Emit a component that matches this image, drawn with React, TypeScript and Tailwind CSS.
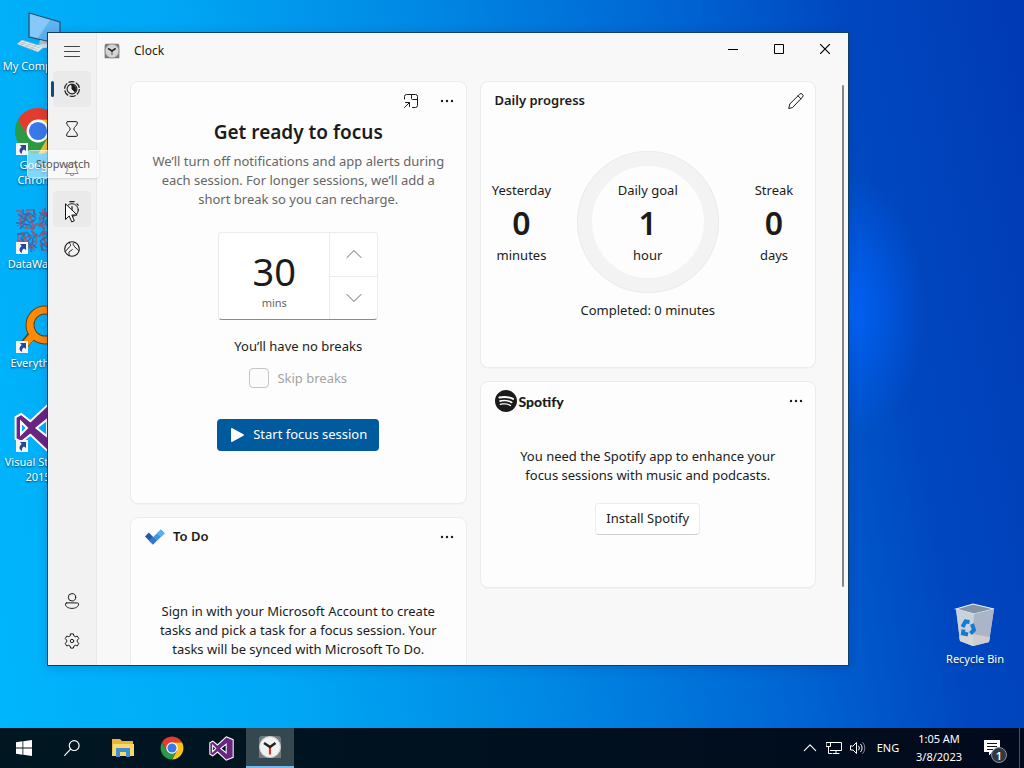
import { type ReactNode } from "react";
import clsx from "clsx";
import { SiSpotify } from "react-icons/si";

type BoxProps = { children: ReactNode; className?: string; size?: number };

function Line({ children, className, size = 16 }: BoxProps) {
  return (
    <svg
      width={size}
      height={size}
      viewBox="0 0 16 16"
      fill="none"
      stroke="currentColor"
      strokeWidth={1}
      strokeLinecap="round"
      strokeLinejoin="round"
      className={className}
      aria-hidden="true"
    >
      {children}
    </svg>
  );
}

const MenuIcon = () => (
  <Line>
    <path d="M.5 3.500h15M.5 8.500h15M.5 13.500h15" stroke="#444" />
  </Line>
);
const FocusIcon = () => (
  <Line>
    <circle cx="8" cy="8" r="7.400" strokeDasharray="6.200 1.550" strokeWidth="1.200" strokeLinecap="butt" />
    <circle cx="8" cy="8" r="4.900" strokeWidth="1.100" />
    <path d="M8 4v4l2.800 2.800A4 4 0 0 0 8 4z" fill="currentColor" />
  </Line>
);
const TimerIcon = () => (
  <Line>
    <path d="M3.700.6h8.600c.8 0 1.200.5 1.100 1.300-.3 3-3.600 4.200-3.600 6.100s3.300 3.100 3.600 6.100c.1.800-.3 1.300-1.100 1.300H3.700c-.8 0-1.200-.5-1.100-1.300.3-3 3.600-4.200 3.600-6.100S2.900 4.900 2.600 1.900C2.500 1.100 2.900.6 3.700.6z" />
  </Line>
);
const BellIcon = () => (
  <Line>
    <path d="M1.800 12.500h12.400l-1.400-2.600V6.500a4.800 4.800 0 0 0-9.600 0v3.400zM6 12.700a2 2 0 0 0 4 0" />
  </Line>
);
const StopwatchIcon = () => (
  <Line>
    <circle cx="8" cy="9" r="6.300" />
    <path d="M5.800.6h4.400M8 5.500V9M13 3l1.200 1.200" strokeWidth="1.200" />
  </Line>
);
const WorldIcon = () => (
  <Line>
    <circle cx="8" cy="8" r="7.300" strokeWidth="1.100" />
    <path d="M5.300 1.300c-.3 1.700 1.600 1.500 1.300 3C6.300 5.800 5 5.600 4.400 7S2.500 8.800 1.200 10.400M10.700 1.300C9.300 2 8.600 3.200 9.600 4.200s1.100 1.900 2.200 2.900 2.600 1.600 3.200 2.600M5.200 14.500c.4-1.500-.8-2.500 0-3.700s2.400-.8 3.100-2.200" />
  </Line>
);
const PersonIcon = () => (
  <Line>
    <circle cx="8" cy="4.300" r="3.700" />
    <path d="M2.700 9.900h10.600c.8 0 1.300.5 1.300 1.200 0 2.500-2.900 4.300-6.600 4.300s-6.600-1.800-6.600-4.300c0-.7.5-1.200 1.300-1.200z" />
  </Line>
);
const GearIcon = () => (
  <Line>
    <circle cx="8" cy="8" r="1.700" />
    <path d="M6.600.9h2.800l.5 2 1.400.8 2-.6 1.500 2.500-1.500 1.500v1.800l1.500 1.500-1.500 2.500-2-.6-1.400.8-.5 2H6.600l-.5-2-1.400-.8-2 .6-1.500-2.500 1.500-1.500V7.100L1.200 5.600l1.500-2.500 2 .6 1.400-.8z" />
  </Line>
);
const CompactIcon = () => (
  <Line>
    <path d="M1.500 6V3.500a2 2 0 0 1 2-2h9a2 2 0 0 1 2 2v9a2 2 0 0 1-2 2H9.500M8.500 1.500v4a1 1 0 0 0 1 1h5M1.500 14.500l5-5M2.500 9.500h4v4" />
  </Line>
);
const PencilIcon = () => (
  <Line>
    <path d="M.8 15.200l1-4.200L11.500 1.300a1.900 1.900 0 0 1 2.900 0 1.900 1.900 0 0 1 0 2.900L4.900 14.200zM10 2.900l3 3" />
  </Line>
);
const MoreIcon = () => (
  <svg width="14" height="4" viewBox="0 0 14 4" fill="currentColor" aria-hidden="true">
    <circle cx="2" cy="2" r="1.200" />
    <circle cx="7" cy="2" r="1.200" />
    <circle cx="12" cy="2" r="1.200" />
  </svg>
);

function ClockLogo({ size, color }: { size: number; color?: boolean }) {
  return (
    <svg width={size} height={size} viewBox="0 0 24 24" aria-hidden="true">
      <path d="M4 1h16a3 3 0 0 1 3 3v19H1V4a3 3 0 0 1 3-3z" fill={color ? "#707b80" : "#777"} />
      <circle cx="12" cy="12" r="10.500" fill={color ? "#f1f1f1" : "#d4d4d4"} stroke={color ? "#c9c9c9" : "#858585"} />
      {color && <path d="M12 12v7.500" stroke="#cf3b32" strokeWidth="2.200" />}
      {!color && <path d="M12 12v6" stroke="#555" strokeWidth="1.500" />}
      <path d="M6 8l6 4 5.500-4" fill="none" stroke="#222" strokeWidth="2.400" />
    </svg>
  );
}

function ChromeLogo({ size }: { size: number }) {
  return (
    <svg width={size} height={size} viewBox="1 1 46 46" aria-hidden="true">
      <path d="M43.050 13A22 22 0 0 1 24 46l9.530-16.500L24 13z" fill="#fbc116" />
      <path d="M24 46A22 22 0 0 1 4.950 13l9.520 16.500h19.060z" fill="#2a9a45" />
      <path d="M4.950 13a22 22 0 0 1 38.100 0H24l-9.530 16.500z" fill="#e33b2e" />
      <circle cx="24" cy="24" r="11" fill="#fff" />
      <circle cx="24" cy="24" r="8.700" fill="#3a78e8" />
    </svg>
  );
}

function StudioLogo({ size }: { size: number }) {
  return (
    <svg width={size} height={size} viewBox="0 0 24 24" aria-hidden="true">
      <path
        d="M16.500.8l6.700 2.700v17l-6.700 2.700-8.300-7.800L3.600 19 .8 17.500v-11L3.600 5l4.600 3.600zM3.500 9v6l3-3zM16.500 7.800L11.300 12l5.200 4.200z"
        fill="#6a2581"
        fillRule="evenodd"
        stroke="#fff"
        strokeWidth="1"
      />
    </svg>
  );
}

const ComputerLogo = () => (
  <svg width="48" height="48" viewBox="0 0 48 48" aria-hidden="true">
    <path d="M15 5l31 9v22l-31-7z" fill="#5cb4f0" stroke="#2c4f6e" strokeWidth="1.200" />
    <path d="M16 6l20 6-12 18-8-2z" fill="#86c9f8" />
    <path d="M26 32l8 2v5l-9-3z" fill="#aebfca" />
    <path d="M8 32l22 7-6 5L3 36z" fill="#e6edf2" stroke="#9ab" strokeWidth=".6" />
    <path d="M7 34l19 6M5 35l19 7M12 33l-5 4M17 35l-5 4M22 37l-5 4" stroke="#a9b8c2" strokeWidth=".7" />
    <path d="M22 37l18-2v4l-10 1z" fill="#d7e2ea" />
  </svg>
);

const DataLogo = () => (
  <svg width="48" height="48" viewBox="0 0 48 48" fill="none" strokeWidth="1.300" opacity=".85" aria-hidden="true">
    {[0, 90, 180, 270].map((angle) => (
      <g key={angle} transform={`rotate(${angle} 24 24)`}>
        <path d="M2 5h5v5h6V4h6l3 5M4 13l6 3 5-5 5 5M3 20l7-3 4 5h6l3-5M12 7l5 4 5-2M7 12v8l6 3M17 14l3 8" stroke="#c0455c" />
        <path d="M4 8l6 5 5-6 7 5M2 17h6l4-4 4 4 6-4M6 23l4-5 6 1 4 4M9 3v5l6 1M20 3v6" stroke="#3c5a9e" />
      </g>
    ))}
    <circle cx="24" cy="24" r="6" stroke="#b14a6c" />
  </svg>
);

const EverythingLogo = () => (
  <svg width="48" height="48" viewBox="0 0 48 48" fill="none" aria-hidden="true">
    <path d="M17 31L7 44" stroke="#5b4322" strokeWidth="9" />
    <circle cx="31" cy="20" r="15" stroke="#5b4322" strokeWidth="9" />
    <path d="M20 29L8 43" stroke="#ff8a06" strokeWidth="7" />
    <circle cx="31" cy="20" r="15" stroke="#ff8a06" strokeWidth="7" />
  </svg>
);

const RecycleLogo = () => (
  <svg width="48" height="48" viewBox="0 0 48 48" aria-hidden="true">
    <path d="M5 8l17-5 21 5-5 33-16 4-13-5z" fill="#b9c4d4" />
    <path d="M5 8l17-5 21 5-20 5z" fill="#8394aa" stroke="#e4ebf3" strokeWidth="1.200" />
    <path d="M5 8l18 5-1 32-13-5z" fill="#c9d1dd" />
    <path d="M23 13l20-5-5 33-16 4z" fill="#aab5c7" />
    <path d="M8 36l14-3 17 3-1 5-16 4-13-5z" fill="#dcd6d0" opacity=".75" />
    <g fill="none" stroke="#137bd0" strokeWidth="4">
      <path d="M11.500 26l3-5.500 4 .5M21 23l2 6-3.500 3.500M17 33.500l-5-1 .5-4" />
    </g>
  </svg>
);

const TodoLogo = () => (
  <svg width="20" height="16" viewBox="0 0 20 16" aria-hidden="true">
    <path d="M0 7.500L3.800 3.600 11.500 11.400 7.700 15.300z" fill="#2158b0" />
    <path d="M4.300 11.700L15.900.4l3.800 3.800L8.200 15.600z" fill="#3f97e0" />
    <path d="M12 4.200L15.900.4l3.800 3.800-3.900 3.900z" fill="#58b1ec" />
    <path d="M3.900 11.500l3.800-3.900 3.900 3.900-3.800 3.900z" fill="#3578cb" />
  </svg>
);

const Shortcut = () => (
  <svg width="12" height="12" viewBox="0 0 12 12" className="absolute bottom-0 left-0.5" aria-hidden="true">
    <path d="M0 0h12v12H0z" fill="#f4f4f4" />
    <path d="M4 2h6v6L8 6.500C6 7.500 5.800 9 6 11 3 9.500 2.500 6.500 5.700 4z" fill="#28478f" />
  </svg>
);

function DesktopItem({ label, shortcut, children }: { label: string; shortcut?: boolean; children: ReactNode }) {
  return (
    <a href="#" className="flex h-[99px] w-[76px] flex-col items-center gap-0.5 text-center text-[11px] leading-[15px] text-white [text-shadow:0_1px_2px_#00385f]">
      <span className="relative">
        {children}
        {shortcut && <Shortcut />}
      </span>
      <span className="whitespace-pre">{label}</span>
    </a>
  );
}

function NavButton({ label, state, children }: { label: string; state?: "active" | "hover"; children: ReactNode }) {
  return (
    <button
      aria-label={label}
      className={clsx("relative flex h-9 w-[38px] shrink-0 items-center justify-center rounded", state && "bg-[#eaeaea]")}
    >
      {state === "active" && <span className="absolute left-[-2px] h-4 w-[3px] rounded-full bg-[#104a7c]" />}
      {children}
    </button>
  );
}

function IconButton({ label, children }: { label: string; children: ReactNode }) {
  return (
    <button aria-label={label} className="flex size-9 items-center justify-center">
      {children}
    </button>
  );
}

function Card({ className, children }: { className?: string; children: ReactNode }) {
  return (
    <section className={clsx("flex shrink-0 flex-col rounded-lg border border-[#ececec] bg-[#fdfdfd] shadow-[0_1px_1px_#00000006]", className)}>
      {children}
    </section>
  );
}

function CardHeader({ title, children }: { title?: ReactNode; children: ReactNode }) {
  return (
    <header className="flex h-[38px] items-center pr-px pl-3.5">
      {title}
      <div className="ml-auto flex">{children}</div>
    </header>
  );
}

function Stat({ label, value, unit }: { label: string; value: string; unit: string }) {
  return (
    <div className="flex flex-col items-center leading-5">
      <span>{label}</span>
      <span className="text-[32px] leading-[45px] font-semibold">{value}</span>
      <span>{unit}</span>
    </div>
  );
}

function FocusCard() {
  return (
    <Card className="h-[423px]">
      <CardHeader>
        <IconButton label="Keep on top"><CompactIcon /></IconButton>
        <IconButton label="More options"><MoreIcon /></IconButton>
      </CardHeader>
      <div className="flex flex-col items-center">
        <h1 className="text-[19px] leading-6 font-semibold">Get ready to focus</h1>
        <p className="mt-2 text-center leading-[19px] text-[#666]">
          We’ll turn off notifications and app alerts during<br />
          each session. For longer sessions, we’ll add a<br />
          short break so you can recharge.
        </p>
        <div className="mt-[23px] flex h-[88px] w-40 rounded border border-[#ececec] border-b-[#8a8a8a] bg-white">
          <label className="flex flex-1 flex-col items-center pt-3.5">
            <input defaultValue="30" className="w-20 bg-transparent text-center text-[38px] leading-[48px] outline-none" />
            <span className="text-[11px] leading-4 text-[#666]">mins</span>
          </label>
          <div className="flex w-12 flex-col divide-y divide-[#ececec] border-l border-[#ececec] text-[#666]">
            <button aria-label="Increase" className="flex flex-1 items-center justify-center">
              <Line><path d="M1 11.500l7-7 7 7" /></Line>
            </button>
            <button aria-label="Decrease" className="flex flex-1 items-center justify-center">
              <Line><path d="M1 4.500l7 7 7-7" /></Line>
            </button>
          </div>
        </div>
        <p className="mt-4 leading-5">You’ll have no breaks</p>
        <label className="mt-3 flex items-center gap-2 leading-5 text-[#a3a3a3]">
          <input type="checkbox" disabled className="size-5 appearance-none rounded border border-[#c6c6c6] bg-[#fbfbfb]" />
          Skip breaks
        </label>
        <button className="mt-[31px] flex h-8 items-center gap-2 rounded bg-[#005a9e] px-3 text-white">
          <svg width="16" height="16" viewBox="0 0 16 16" fill="#fff" aria-hidden="true">
            <path d="M2 2c0-.8.700-1.200 1.400-.8l11 6c.7.400.7 1.200 0 1.600l-11 6c-.7.400-1.400 0-1.400-.8z" />
          </svg>
          Start focus session
        </button>
      </div>
    </Card>
  );
}

function TodoCard() {
  return (
    <Card className="h-[300px]">
      <CardHeader title={<h2 className="flex items-center gap-2 font-semibold"><TodoLogo />To Do</h2>}>
        <IconButton label="To Do options"><MoreIcon /></IconButton>
      </CardHeader>
      <p className="mt-[46px] text-center leading-[19px]">
        Sign in with your Microsoft Account to create<br />
        tasks and pick a task for a focus session. Your<br />
        tasks will be synced with Microsoft To Do.
      </p>
    </Card>
  );
}

function ProgressCard() {
  return (
    <Card className="h-[287px]">
      <CardHeader title={<h2 className="font-semibold">Daily progress</h2>}>
        <IconButton label="Edit daily goal"><PencilIcon /></IconButton>
      </CardHeader>
      <div className="mt-[31px] grid grid-cols-[82px_1fr_82px] items-center">
        <Stat label="Yesterday" value="0" unit="minutes" />
        <div className="flex size-[142px] items-center justify-center justify-self-center rounded-full border-[15px] border-[#f3f3f3] outline-1 -outline-offset-1 outline-[#ececec]">
          <Stat label="Daily goal" value="1" unit="hour" />
        </div>
        <Stat label="Streak" value="0" unit="days" />
      </div>
      <p className="mt-[7px] text-center leading-5">Completed: 0 minutes</p>
    </Card>
  );
}

function SpotifyCard() {
  return (
    <Card className="h-[207px]">
      <CardHeader
        title={
          <h2 className="flex items-center gap-0.5 font-['Lato','Open_Sans',sans-serif] text-[14px] font-black">
            <SiSpotify className="size-[22px]" />
            Spotify
          </h2>
        }
      >
        <IconButton label="Spotify options"><MoreIcon /></IconButton>
      </CardHeader>
      <div className="mt-[27px] flex flex-col items-center gap-[18px]">
        <p className="text-center leading-[19px]">
          You need the Spotify app to enhance your<br />
          focus sessions with music and podcasts.
        </p>
        <button className="h-8 rounded border border-[#ececec] border-b-[#d0d0d0] bg-white px-2.5">Install Spotify</button>
      </div>
    </Card>
  );
}

function ClockWindow() {
  return (
    <div className="absolute top-8 right-[175px] bottom-[62px] left-[47px] flex border border-[#123f68] bg-[#f8f8f8] text-[13px] text-[#1b1b1b] shadow-[0_2px_10px_#00206030]">
      <nav className="flex w-[49px] shrink-0 flex-col items-center gap-0.5 border-r border-[#e8e8e8] bg-[#f2f2f2] pb-1.5">
        <NavButton label="Open navigation"><MenuIcon /></NavButton>
        <div className="flex flex-col gap-1">
          <NavButton label="Focus sessions" state="active"><FocusIcon /></NavButton>
          <NavButton label="Timer"><TimerIcon /></NavButton>
          <NavButton label="Alarm"><BellIcon /></NavButton>
          <NavButton label="Stopwatch" state="hover"><StopwatchIcon /></NavButton>
          <NavButton label="World clock"><WorldIcon /></NavButton>
        </div>
        <div className="mt-auto flex flex-col gap-1">
          <NavButton label="Sign in"><PersonIcon /></NavButton>
          <NavButton label="Settings"><GearIcon /></NavButton>
        </div>
      </nav>
      <main className="relative flex min-w-0 flex-1 flex-col">
        <header className="flex h-12 shrink-0 items-start">
          <div className="flex h-9 items-center gap-3.5 pl-[7px] text-[12px]">
            <ClockLogo size={16} />
            Clock
          </div>
          <div className="ml-auto flex text-black">
            <button aria-label="Minimize" className="flex h-8 w-[46px] items-center justify-center">
              <svg width="10" height="10" stroke="currentColor" aria-hidden="true"><path d="M0 5.500h10" /></svg>
            </button>
            <button aria-label="Maximize" className="flex h-8 w-[46px] items-center justify-center">
              <svg width="10" height="10" fill="none" stroke="currentColor" aria-hidden="true"><path d="M.5.5h9v9h-9z" /></svg>
            </button>
            <button aria-label="Close" className="flex h-8 w-[46px] items-center justify-center">
              <svg width="10" height="10" stroke="currentColor" strokeWidth="1.200" aria-hidden="true"><path d="M0 0l10 10M10 0L0 10" /></svg>
            </button>
          </div>
        </header>
        <div className="flex min-h-0 flex-1 items-start gap-[13px] overflow-hidden pr-8 pl-[33px]">
          <div className="flex flex-1 flex-col gap-[13px]">
            <FocusCard />
            <TodoCard />
          </div>
          <div className="flex flex-1 flex-col gap-[13px]">
            <ProgressCard />
            <SpotifyCard />
          </div>
        </div>
        <span className="absolute top-[52px] right-1 h-[502px] w-0.5 rounded-full bg-[#858585]" />
      </main>
    </div>
  );
}

function TaskButton({ label, active, children }: { label: string; active?: boolean; children: ReactNode }) {
  return (
    <button
      aria-label={label}
      className={clsx("flex h-10 w-12 items-center justify-center", active && "border-b-2 border-[#76b9ed] bg-[#35474f]")}
    >
      {children}
    </button>
  );
}

function Taskbar() {
  return (
    <footer className="flex h-10 shrink-0 items-center bg-linear-to-r from-[#001722] to-[#010a1c] text-[12px] text-white">
      <TaskButton label="Start">
        <svg width="16" height="16" viewBox="0 0 16 16" fill="#fff" aria-hidden="true">
          <path d="M0 2.200l6.500-.9v6.300H0zM7.300 1.200L16 0v7.600H7.300zM0 8.400h6.500v6.300L0 13.800zM7.300 8.400H16V16l-8.700-1.200z" />
        </svg>
      </TaskButton>
      <TaskButton label="Search">
        <Line><circle cx="10.200" cy="5.600" r="4.900" strokeWidth="1.200" /><path d="M6.600 9.200L.7 15.300" strokeWidth="1.200" /></Line>
      </TaskButton>
      <div className="ml-[3px] flex gap-px">
        <TaskButton label="File Explorer">
          <svg width="22" height="20" viewBox="0 0 22 20" aria-hidden="true">
            <path d="M0 1h8l2 2h11v15H0z" fill="#e9b43c" />
            <path d="M1 6h21v12H0z" fill="#fbd76c" />
            <path d="M4 10h14v9h-4v-5H8v5H4z" fill="#3d8fd0" />
          </svg>
        </TaskButton>
        <TaskButton label="Google Chrome"><ChromeLogo size={24} /></TaskButton>
        <TaskButton label="Visual Studio"><StudioLogo size={25} /></TaskButton>
        <TaskButton label="Clock" active><ClockLogo size={24} color /></TaskButton>
      </div>
      <div className="ml-auto flex h-full items-center">
        <button aria-label="Show hidden icons" className="flex w-6 justify-center">
          <Line size={14}><path d="M1.500 11L8 4.500l6.500 6.500" strokeWidth="1.300" /></Line>
        </button>
        <button aria-label="Network" className="flex w-6 justify-center">
          <Line><path d="M4.500 2.500h11v8h-11M.5 2.500h4v4h-4zM2.500 6.500v7h3M10 10.500v3M7 13.500h6" /></Line>
        </button>
        <button aria-label="Volume" className="flex w-6 justify-center">
          <Line><path d="M.5 6v4h2.500l3.500 3.500v-11L3 6zM8.700 6a3 3 0 0 1 0 4M10.700 4.200a5.500 5.500 0 0 1 0 7.600" /><path d="M12.800 2.500a8 8 0 0 1 0 11" opacity=".5" /></Line>
        </button>
        <button className="w-9 text-[11px]">ENG</button>
        <button className="flex w-[66px] flex-col items-center text-[11px] leading-[18px]">
          <span>1:05 AM</span>
          <span>3/8/2023</span>
        </button>
        <button aria-label="Notifications" className="relative flex h-full w-10 items-center justify-center">
          <svg width="16" height="16" viewBox="0 0 16 16" aria-hidden="true">
            <path d="M0 0h16v12H8.500L5 15.500V12H0z" fill="#fff" />
            <path d="M3 3.500h10M3 6.500h10M3 9.500h6" stroke="#0a1422" />
          </svg>
          <span className="absolute top-[19px] left-[19px] flex size-4 items-center justify-center rounded-full border border-[#8b9299] bg-[#32383f] text-[11px] leading-none font-semibold">1</span>
        </button>
        <span className="mr-1 ml-[7px] h-full w-px bg-[#48505c]" />
      </div>
    </footer>
  );
}

export default function App() {
  return (
    <div className="flex h-screen flex-col overflow-hidden bg-[radial-gradient(ellipse_75px_130px_at_83%_40%,#0066ffcc_0%,#0066ff00_100%),linear-gradient(80deg,#00b6fc_0%,#00a8f5_25%,#0088e4_48%,#0064d2_70%,#0048c0_84%,#003ab4_100%)] font-['Noto_Sans','Open_Sans',sans-serif]">
      <div className="relative min-h-0 flex-1">
        <div className="flex h-full flex-col pt-2">
          <DesktopItem label="My Computer"><ComputerLogo /></DesktopItem>
          <DesktopItem label={"Google\nChrome"} shortcut><ChromeLogo size={48} /></DesktopItem>
          <DesktopItem label="DataWagon" shortcut><DataLogo /></DesktopItem>
          <DesktopItem label="Everything" shortcut><EverythingLogo /></DesktopItem>
          <DesktopItem label={"Visual Studio\n2015"} shortcut><StudioLogo size={48} /></DesktopItem>
        </div>
        <div className="absolute right-[11px] bottom-7">
          <DesktopItem label="Recycle Bin"><RecycleLogo /></DesktopItem>
        </div>
        <ClockWindow />
        <div role="tooltip" className="absolute top-[150px] left-[27px] flex h-7 items-center rounded border border-white/40 bg-white/50 px-2 text-[11px] text-[#555] shadow-sm">
          Stopwatch
        </div>
        <svg width="13" height="20" viewBox="0 0 13 20" className="absolute top-[203px] left-[65px]" aria-hidden="true">
          <path d="M.5.8v15.700l3.700-3.600 2.500 6 2.600-1.100-2.500-5.800h5.300z" fill="#fff" stroke="#111" />
        </svg>
      </div>
      <Taskbar />
    </div>
  );
}
